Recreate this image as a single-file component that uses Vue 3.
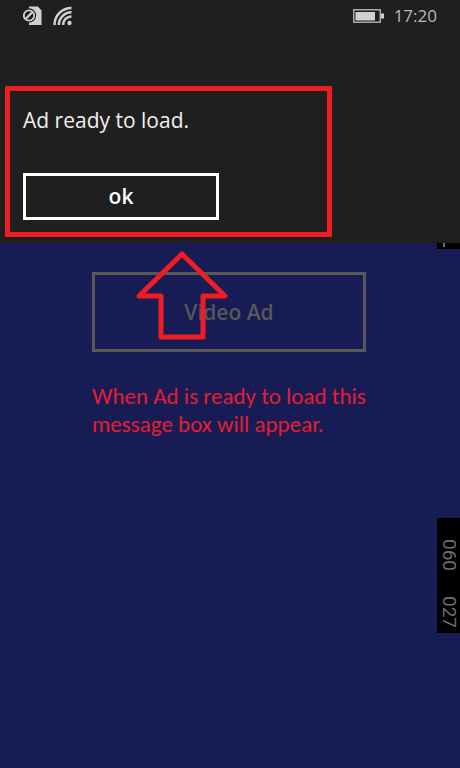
<template>
  <div class="screen">
    <header class="message-box">
      <div class="status-bar">
        <div class="status-icons">
          <!-- SIM card -->
          <svg width="20" height="20" viewBox="0 0 20 20" aria-label="No SIM">
            <path d="M6 0.500h9l3.500 4V19H6z" fill="#d0d0d0" />
            <circle cx="6" cy="9.500" r="7.200" fill="#1f1f1f" />
            <circle cx="6" cy="9.500" r="5.200" fill="none" stroke="#d0d0d0" stroke-width="1.800" />
            <path d="M3 12.500l6-6" stroke="#d0d0d0" stroke-width="2.400" />
          </svg>
          <!-- Wi-Fi -->
          <svg width="20" height="20" viewBox="0 0 20 20" aria-label="Wi-Fi">
            <g fill="none" stroke="#d0d0d0" stroke-width="2.500">
              <path d="M1.500 19A17 17 0 0 1 18.500 2" />
              <path d="M5.800 19A12.700 12.700 0 0 1 18.500 6.300" />
              <path d="M10 19A8.500 8.500 0 0 1 18.500 10.500" />
            </g>
            <circle cx="16.500" cy="17" r="2.200" fill="#d0d0d0" />
          </svg>
        </div>
        <div class="status-clock">
          <svg width="32" height="14" viewBox="0 0 32 14" aria-label="Battery">
            <rect x="0.750" y="0.750" width="26.500" height="12.500" fill="none" stroke="#aaa" stroke-width="1.500" />
            <rect x="2.500" y="3" width="19.500" height="8.500" fill="#d0d0d0" />
            <rect x="28" y="4.500" width="3" height="5" fill="#d0d0d0" />
          </svg>
          <time>{{ time }}</time>
        </div>
      </div>

      <section class="highlight">
        <p class="message">Ad ready to load.</p>
        <button type="button" class="ok-btn">ok</button>
        <svg class="arrow" width="96" height="92" viewBox="0 0 96 92" aria-hidden="true">
          <path
            d="M48 4L91 46H69V87H27V46H5Z"
            fill="none"
            stroke="#f01c24"
            stroke-width="5"
            stroke-linejoin="round"
          />
        </svg>
      </section>
    </header>

    <main class="page">
      <div class="content">
        <button type="button" class="video-btn" disabled>Video Ad</button>
        <p class="note">When Ad is ready to load this message box will appear.</p>
      </div>

      <!-- frame rate counters -->
      <aside class="counters">
        <div class="counter-top"><span class="tick"></span></div>
        <div class="counter">
          <span v-for="value in counters" :key="value">{{ value }}</span>
        </div>
      </aside>
    </main>
  </div>
</template>

<script setup>
import { ref } from 'vue';

const time = ref('17:20');
const counters = ref(['060', '027']);
</script>

<style>
body {
  background: #181c54;
}
</style>

<style scoped>
.screen {
  min-height: 100vh;
  display: flex; flex-direction: column;
  font-family: 'Open Sans', 'Noto Sans', sans-serif;
  background: #181c54;
}

.message-box {
  position: relative; z-index: 1;
  padding-bottom: 6px;
  background: #1f1f1f;
}

.status-bar {
  display: flex; justify-content: space-between;
  height: 32px; padding: 0 23px;
  box-sizing: border-box;
}
.status-icons { display: flex; gap: 10px; padding-top: 6px; }
.status-clock { display: flex; align-items: center; gap: 9px; }
.status-clock time { color: #b8b8b8; font-size: 17px; line-height: 32px; }

/* message area outlined in red */
.highlight {
  position: relative;
  width: 71%; margin: 54px 0 0 5px;
  padding: 15px 13px 12px;
  box-sizing: border-box;
  border: 5px solid #f01c24;
}
.message {
  margin: 0 0 39px;
  color: #f0f0f0; font-size: 21px; line-height: 28px;
}
.ok-btn {
  display: block;
  width: 196px; height: 47px; padding: 0 0 2px;
  color: #fff; background: transparent;
  border: 3px solid #fff;
  font-family: inherit; font-size: 21px; font-weight: 600;
}

.arrow { position: absolute; top: 159px; left: 124px; }

.page { flex: 1; display: flex; }
.content { flex: 1; padding: 29px 0 0 92px; }

.video-btn {
  display: block;
  width: 274px; height: 80px; padding: 0;
  color: #585858; background: transparent;
  border: 3px solid #585858;
  font-family: inherit; font-size: 21px; font-weight: 600;
}

.note {
  width: 290px; margin: 30px 0 0;
  color: #e41c34;
  font-family: Carlito, Calibri, Lato, sans-serif;
  font-size: 23px; line-height: 28px;
}

.counters {
  display: flex; flex-direction: column; gap: 269px;
  width: 23px;
}
.counter-top { height: 6px; padding-left: 6px; background: #000; }
.tick { display: block; width: 2px; height: 4px; background: #6e6e6e; }
.counter {
  display: flex; gap: 25px;
  height: 115px; padding-top: 21px;
  box-sizing: border-box;
  writing-mode: vertical-rl;
  color: #6e6e6e; background: #000;
  font-family: Roboto, 'Liberation Sans', sans-serif;
  font-size: 19px; line-height: 22px;
}
</style>
